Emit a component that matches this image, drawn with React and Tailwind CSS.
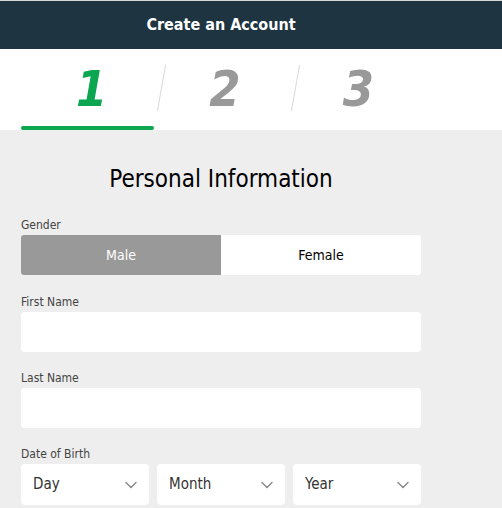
import React from "react";
import { ChevronDown } from "lucide-react";

function Select({ label }) {
  return (
    <div className="flex h-[41px] w-[128px] items-center justify-between rounded-[4px] bg-white pl-[12px] pr-[8px] text-[15px] text-[#333]">
      <span>{label}</span>
      <ChevronDown size={20} strokeWidth={1.7} className="text-[#8a8a8a]" />
    </div>
  );
}

export default function App() {
  return (
    <div className="min-h-[508px] w-[502px] bg-[#eeeeee] font-['DejaVu_Sans_Condensed','DejaVu_Sans',sans-serif]">
      <div className="h-px bg-[#d6d6d6]" />
      <div className="h-[48px] bg-[#1e3441]">
        <div className="flex h-full w-[442px] items-center justify-center text-[16px] font-bold text-white">
          Create an Account
        </div>
      </div>
      <div className="bg-white">
        <div className="flex w-[442px] px-[21px]">
          {["1", "2", "3"].map((n, i) => (
            <div key={n} className="relative flex h-[81px] flex-1 flex-col">
              {i > 0 && (
                <div className="absolute left-[7px] top-[16px] h-[46px] w-px skew-x-[-10deg] bg-[#d8d8d8]" />
              )}
              <div
                className={
                  "flex flex-1 items-center justify-center pl-[8px] pt-[2px] text-[50px] font-bold italic leading-none " +
                  (i === 0 ? "text-[#0ba64f]" : "text-[#999999]")
                }
              >
                {n}
              </div>
              <div className={"h-[4px] rounded-full " + (i === 0 ? "bg-[#0ba64f]" : "bg-transparent")} />
            </div>
          ))}
        </div>
      </div>
      <div className="w-[442px] px-[21px]">
        <div className="pt-[34px] text-center text-[24px] leading-[30px] text-black">Personal Information</div>
        <div className="mt-[23px] text-[12px] leading-[16px] text-[#444]">Gender</div>
        <div className="mt-[2px] flex h-[40px] overflow-hidden rounded-[3px] text-[14px]">
          <div className="flex flex-1 items-center justify-center bg-[#999999] text-white">Male</div>
          <div className="flex flex-1 items-center justify-center bg-white text-black">Female</div>
        </div>
        <div className="mt-[19px] text-[12px] leading-[16px] text-[#444]">First Name</div>
        <div className="mt-[2px] h-[40px] rounded-[4px] bg-white" />
        <div className="mt-[18px] text-[12px] leading-[16px] text-[#444]">Last Name</div>
        <div className="mt-[2px] h-[40px] rounded-[4px] bg-white" />
        <div className="mt-[18px] text-[12px] leading-[16px] text-[#444]">Date of Birth</div>
        <div className="mt-[2px] flex gap-[8px]">
          <Select label="Day" />
          <Select label="Month" />
          <Select label="Year" />
        </div>
      </div>
    </div>
  );
}
